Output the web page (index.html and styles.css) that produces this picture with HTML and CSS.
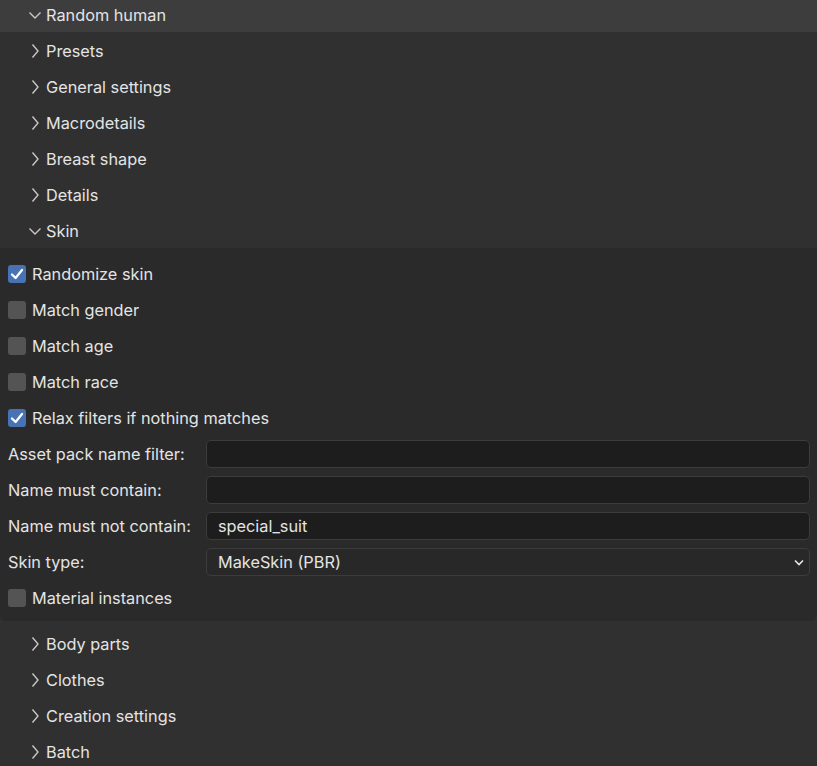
FILE: index.html
```
<!DOCTYPE html>
<html>
<head>
<meta charset="utf-8">
<link rel="stylesheet" href="styles.css">
</head>
<body>
<div class="panel">
  <div class="hdr top"><svg class="chev" viewBox="0 0 14 10"><path d="M1.5 2.5 L7 8 L12.5 2.5"/></svg><span>Random human</span></div>
  <div class="sub">
    <div class="hdr"><svg class="chevr" viewBox="0 0 10 16"><path d="M2.5 1.5 L8 8 L2.5 14.5"/></svg><span>Presets</span></div>
    <div class="hdr"><svg class="chevr" viewBox="0 0 10 16"><path d="M2.5 1.5 L8 8 L2.5 14.5"/></svg><span>General settings</span></div>
    <div class="hdr"><svg class="chevr" viewBox="0 0 10 16"><path d="M2.5 1.5 L8 8 L2.5 14.5"/></svg><span>Macrodetails</span></div>
    <div class="hdr"><svg class="chevr" viewBox="0 0 10 16"><path d="M2.5 1.5 L8 8 L2.5 14.5"/></svg><span>Breast shape</span></div>
    <div class="hdr"><svg class="chevr" viewBox="0 0 10 16"><path d="M2.5 1.5 L8 8 L2.5 14.5"/></svg><span>Details</span></div>
    <div class="hdr"><svg class="chev" viewBox="0 0 14 10"><path d="M1.5 2.5 L7 8 L12.5 2.5"/></svg><span>Skin</span></div>
    <div class="content">
      <div class="row"><span class="cb on"><svg viewBox="0 0 18 18"><path d="M4 9.5 L7.6 13 L14 5"/></svg></span>Randomize skin</div>
      <div class="row"><span class="cb"></span>Match gender</div>
      <div class="row"><span class="cb"></span>Match age</div>
      <div class="row"><span class="cb"></span>Match race</div>
      <div class="row"><span class="cb on"><svg viewBox="0 0 18 18"><path d="M4 9.5 L7.6 13 L14 5"/></svg></span>Relax filters if nothing matches</div>
      <div class="row field"><span class="lbl">Asset pack name filter:</span><span class="input"></span></div>
      <div class="row field"><span class="lbl">Name must contain:</span><span class="input"></span></div>
      <div class="row field"><span class="lbl">Name must not contain:</span><span class="input">special_suit</span></div>
      <div class="row field"><span class="lbl">Skin type:</span><span class="input select">MakeSkin (PBR)<svg class="dd" viewBox="0 0 10 7"><path d="M1 1.5 L5 5.5 L9 1.5"/></svg></span></div>
      <div class="row"><span class="cb"></span>Material instances</div>
    </div>
    <div class="gap"></div>
    <div class="hdr"><svg class="chevr" viewBox="0 0 10 16"><path d="M2.5 1.5 L8 8 L2.5 14.5"/></svg><span>Body parts</span></div>
    <div class="hdr"><svg class="chevr" viewBox="0 0 10 16"><path d="M2.5 1.5 L8 8 L2.5 14.5"/></svg><span>Clothes</span></div>
    <div class="hdr"><svg class="chevr" viewBox="0 0 10 16"><path d="M2.5 1.5 L8 8 L2.5 14.5"/></svg><span>Creation settings</span></div>
    <div class="hdr"><svg class="chevr" viewBox="0 0 10 16"><path d="M2.5 1.5 L8 8 L2.5 14.5"/></svg><span>Batch</span></div>
  </div>
</div>
</body>
</html>
```
FILE: styles.css
```
html, body {
  margin: 0;
  padding: 0;
  background: #303030;
  overflow: hidden;
}
body {
  font-family: Inter, "Noto Sans", sans-serif;
  font-size: 16.3px;
  color: #e4e4e4;
  width: 817px;
  height: 766px;
}
.panel {
  display: flex;
  flex-direction: column;
}
.hdr {
  height: 36px;
  display: flex;
  align-items: center;
  padding-left: 28px;
  box-sizing: border-box;
}
.hdr.top {
  height: 32px;
  background: #3d3d3d;
  padding-bottom: 2px;
}
.hdr span {
  margin-left: 4px;
}
.chev {
  width: 14px;
  height: 10px;
  fill: none;
  stroke: #c8c8c8;
  stroke-width: 1.4;
}
.chevr {
  width: 10px;
  height: 16px;
  margin-left: 2px;
  margin-right: 2px;
  fill: none;
  stroke: #c8c8c8;
  stroke-width: 1.4;
}
.sub {
  background: #303030;
  display: flex;
  flex-direction: column;
}
.sub > .hdr:first-child {
  height: 37px;
}
.content {
  background: #2a2a2a;
  padding: 8px 0 5px 8px;
  margin-top: -1px;
  border-radius: 0 0 6px 6px;
}
.row {
  height: 36px;
  display: flex;
  align-items: center;
}
.cb {
  width: 18px;
  height: 18px;
  border-radius: 3px;
  background: #545454;
  margin-right: 6px;
  box-sizing: border-box;
  display: flex;
}
.cb.on {
  background: #4772b3;
}
.cb svg {
  width: 18px;
  height: 18px;
  fill: none;
  stroke: #ffffff;
  stroke-width: 2.3;
  stroke-linecap: round;
  stroke-linejoin: round;
}
.field .lbl {
  width: 198px;
  flex: none;
}
.input {
  flex: 1;
  height: 28px;
  margin-right: 7px;
  background: #1d1d1d;
  border: 1px solid #3c3c3c;
  border-radius: 5px;
  box-sizing: border-box;
  display: flex;
  align-items: center;
  padding-left: 11px;
}
.input.select {
  background: #282828;
  position: relative;
}
.dd {
  position: absolute;
  right: 5px;
  top: 10px;
  width: 10px;
  height: 7px;
  fill: none;
  stroke: #e6e6e6;
  stroke-width: 1.6;
}
.gap {
  height: 5px;
}
```
